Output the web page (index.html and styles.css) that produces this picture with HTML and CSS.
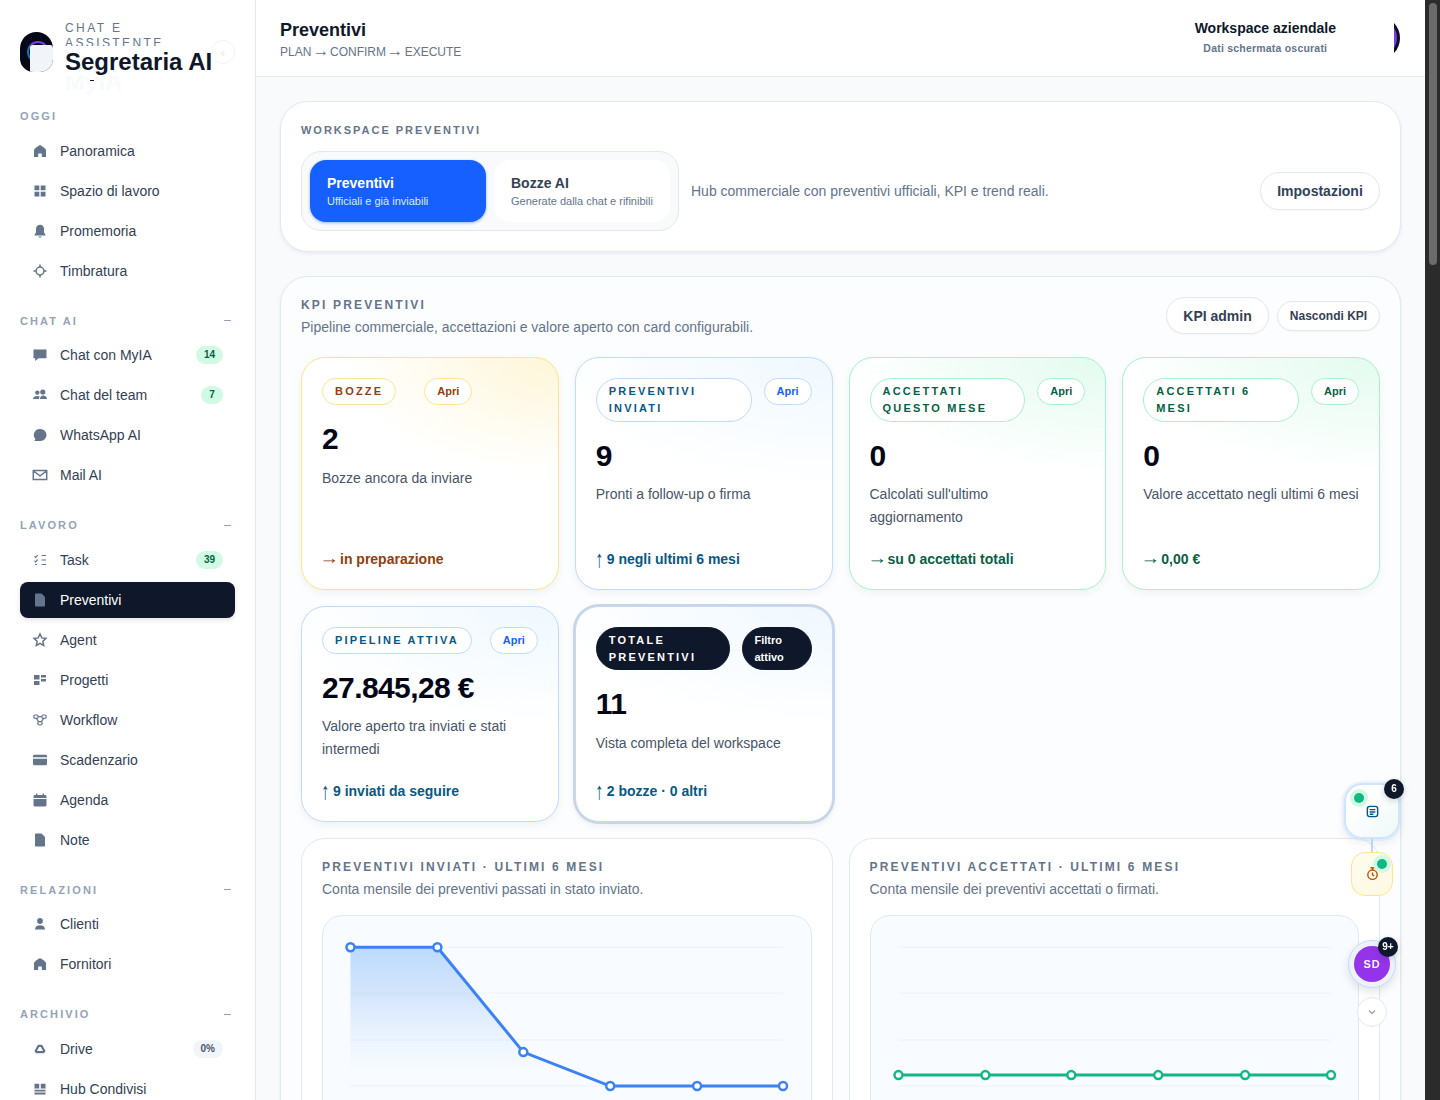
FILE: index.html
```html
<!DOCTYPE html>
<html lang="it">
<head>
    <meta charset="UTF-8">
    <meta name="viewport" content="width=device-width, initial-scale=1.0">
    <title>Preventivi - Segretaria AI</title>
    <link rel="stylesheet" href="styles.css">
</head>
<body>
    <!-- icon sprite -->
    <svg class="sprite" xmlns="http://www.w3.org/2000/svg">
        <symbol id="i-home" viewBox="0 0 16 16"><path d="M8 2C6 3 3.500 4.800 2 6.800V14h4.200v-3.600h3.600V14H14V6.800C12.500 4.800 10 3 8 2z"/></symbol>
        <symbol id="i-grid" viewBox="0 0 16 16"><path d="M2.500 2.500h4.800v4.800H2.500zM8.700 2.500h4.800v4.800H8.700zM2.500 8.700h4.800v4.800H2.500zM8.700 8.700h4.800v4.800H8.700z"/></symbol>
        <symbol id="i-bell" viewBox="0 0 16 16"><path d="M8 1.800c-2.500 0-4 1.800-4 4.200v3.600l-1.400 2v.8h10.800v-.8l-1.400-2V6c0-2.400-1.500-4.200-4-4.200zM6.400 13.400h3.200c-.2.800-.8 1.200-1.600 1.200s-1.400-.4-1.600-1.200z"/></symbol>
        <symbol id="i-target" viewBox="0 0 16 16"><path class="line" d="M8 1.500v2.700M8 11.800v2.700M1.500 8h2.700M11.800 8h2.700"/><circle class="line" cx="8" cy="8" r="3.900"/></symbol>
        <symbol id="i-chat" viewBox="0 0 16 16"><path d="M1.500 2.500h13v8.800H6.500L3 14l.3-2.700H1.500z"/></symbol>
        <symbol id="i-team" viewBox="0 0 16 16"><circle cx="5.300" cy="5.600" r="2.200"/><circle cx="10.800" cy="5" r="2.600"/><path d="M1 12c0-2 2-3.100 4.300-3.100 1 0 1.900.2 2.500.6-.6.600-.8 1.400-.8 2.500zM8 12c0-2.300 1.400-3.600 3-3.600s4 .8 4 3.600z"/></symbol>
        <symbol id="i-bubble" viewBox="0 0 16 16"><path d="M8.500 2a6 6 0 0 1 0 12H2.300l1.200-1.900A6 6 0 0 1 8.500 2z"/></symbol>
        <symbol id="i-mail" viewBox="0 0 16 16"><path class="line" d="M1.300 3.500h13.400v9H1.300zM1.500 4l6.500 4.800L14.500 4"/></symbol>
        <symbol id="i-task" viewBox="0 0 16 16"><path class="line thin" d="M2.500 4.300l1.200 1.100 2-2.200M2.500 8.800l1.200 1.100 2-2.200M9.500 3.500h4.500M9.500 8h4.500M9.500 12.500h4.500M3 12.500h2"/></symbol>
        <symbol id="i-doc" viewBox="0 0 16 16"><path d="M3 2.200c0-.4.300-.7.700-.7H9.500L13 5v8.800c0 .4-.3.700-.7.700H3.700c-.4 0-.7-.3-.7-.7z"/></symbol>
        <symbol id="i-star" viewBox="0 0 16 16"><path class="line" d="M8 2l1.800 3.900 4.200.5-3.100 2.900.8 4.200L8 11.400l-3.700 2.100.8-4.200L2 6.400l4.200-.5z"/></symbol>
        <symbol id="i-board" viewBox="0 0 16 16"><path d="M2 3h5.500v4.500H2zM9 3h5v2.500H9zM9 7h5v2.500H9zM2 9h5.500v4H2z"/></symbol>
        <symbol id="i-flow" viewBox="0 0 16 16"><g class="line thin"><rect x="1.800" y="3" width="4.300" height="3.400" rx="1.500"/><rect x="9.900" y="3" width="4.300" height="3.400" rx="1.500"/><rect x="5.800" y="9.600" width="4.300" height="3.400" rx="1.500"/><path d="M6.100 4.700h3.800M4.500 6.400l2 3.200M11.500 6.400l-2 3.200"/></g></symbol>
        <symbol id="i-card" viewBox="0 0 16 16"><path d="M1 4.200c0-.8.600-1.400 1.400-1.400h11.200c.8 0 1.400.6 1.400 1.400v1H1zM1 6.800h14v5c0 .8-.6 1.400-1.400 1.400H2.400c-.8 0-1.400-.6-1.400-1.400z"/></symbol>
        <symbol id="i-cal" viewBox="0 0 16 16"><path d="M4 1.500h1.300v1.400h5.400V1.500H12v1.400h1c.8 0 1.500.7 1.500 1.500v1.500h-13V4.400c0-.8.700-1.500 1.500-1.500h1zM1.500 7h13v6c0 .8-.7 1.500-1.500 1.500H3c-.8 0-1.500-.7-1.500-1.500z"/></symbol>
        <symbol id="i-user" viewBox="0 0 16 16"><circle cx="8" cy="5" r="2.900"/><path d="M3 13.500c0-2.800 2.200-4.300 5-4.300s5 1.500 5 4.300z"/></symbol>
        <symbol id="i-drive" viewBox="0 0 16 16"><path class="line heavy" d="M6.600 4.800h2.800l2.900 5.200-.8 1.200H4.500l-.8-1.200z"/></symbol>
        <symbol id="i-hub" viewBox="0 0 16 16"><path d="M2.500 2.800h4.700v4.600H2.500zM8.800 2.800h4.700v4.600H8.800zM2.500 8.800h11v1.800h-11zM2.500 11.600h11v1.800h-11z"/></symbol>
    </svg>

    <div class="app">
        <aside class="sidebar">
            <div class="brand">
                <div class="logo"><span class="logo-ring"></span><span class="logo-mask"></span></div>
                <div class="brand-text">
                    <div class="brand-kicker">CHAT E ASSISTENTE</div>
                    <div class="brand-title">Segretaria AI</div>
                    <div class="brand-ghost">MyIA</div>
                    <span class="brand-tick"></span>
                </div>
                <span class="brand-toggle">‹</span>
            </div>

            <div class="nav-label">OGGI</div>
            <a class="nav-item"><svg class="icon"><use href="#i-home"/></svg>Panoramica</a>
            <a class="nav-item"><svg class="icon"><use href="#i-grid"/></svg>Spazio di lavoro</a>
            <a class="nav-item"><svg class="icon"><use href="#i-bell"/></svg>Promemoria</a>
            <a class="nav-item"><svg class="icon"><use href="#i-target"/></svg>Timbratura</a>

            <div class="nav-label spaced">CHAT AI<span class="nav-dash"></span></div>
            <a class="nav-item"><svg class="icon"><use href="#i-chat"/></svg>Chat con MyIA<span class="nav-badge">14</span></a>
            <a class="nav-item"><svg class="icon"><use href="#i-team"/></svg>Chat del team<span class="nav-badge">7</span></a>
            <a class="nav-item"><svg class="icon"><use href="#i-bubble"/></svg>WhatsApp AI</a>
            <a class="nav-item"><svg class="icon"><use href="#i-mail"/></svg>Mail AI</a>

            <div class="nav-label spaced">LAVORO<span class="nav-dash"></span></div>
            <a class="nav-item"><svg class="icon"><use href="#i-task"/></svg>Task<span class="nav-badge">39</span></a>
            <a class="nav-item active"><svg class="icon"><use href="#i-doc"/></svg>Preventivi</a>
            <a class="nav-item"><svg class="icon"><use href="#i-star"/></svg>Agent</a>
            <a class="nav-item"><svg class="icon"><use href="#i-board"/></svg>Progetti</a>
            <a class="nav-item"><svg class="icon"><use href="#i-flow"/></svg>Workflow</a>
            <a class="nav-item"><svg class="icon"><use href="#i-card"/></svg>Scadenzario</a>
            <a class="nav-item"><svg class="icon"><use href="#i-cal"/></svg>Agenda</a>
            <a class="nav-item"><svg class="icon"><use href="#i-doc"/></svg>Note</a>

            <div class="nav-label spaced">RELAZIONI<span class="nav-dash"></span></div>
            <a class="nav-item"><svg class="icon"><use href="#i-user"/></svg>Clienti</a>
            <a class="nav-item"><svg class="icon"><use href="#i-home"/></svg>Fornitori</a>

            <div class="nav-label spaced">ARCHIVIO<span class="nav-dash"></span></div>
            <a class="nav-item"><svg class="icon"><use href="#i-drive"/></svg>Drive<span class="nav-badge grey">0%</span></a>
            <a class="nav-item"><svg class="icon"><use href="#i-hub"/></svg>Hub Condivisi</a>
        </aside>

        <div class="main">
            <header class="topbar">
                <div>
                    <h1>Preventivi</h1>
                    <div class="topbar-sub">PLAN <span class="arrow-right">→</span> CONFIRM <span class="arrow-right">→</span> EXECUTE</div>
                </div>
                <div class="topbar-right">
                    <div class="workspace">
                        <div class="workspace-name">Workspace aziendale</div>
                        <div class="workspace-note">Dati schermata oscurati</div>
                    </div>
                    <div class="avatar-clip"><span class="avatar-disc"></span></div>
                </div>
            </header>

            <div class="content">
                <section class="panel">
                    <div class="eyebrow">WORKSPACE PREVENTIVI</div>
                    <div class="switch-row">
                        <div class="tabs">
                            <div class="tab current"><strong>Preventivi</strong><span>Ufficiali e già inviabili</span></div>
                            <div class="tab"><strong>Bozze AI</strong><span>Generate dalla chat e rifinibili</span></div>
                        </div>
                        <p class="switch-text">Hub commerciale con preventivi ufficiali, KPI e trend reali.</p>
                        <button class="btn btn-settings">Impostazioni</button>
                    </div>
                </section>

                <section class="panel panel-soft">
                    <div class="kpi-head">
                        <div>
                            <div class="eyebrow large">KPI PREVENTIVI</div>
                            <p class="kpi-intro">Pipeline commerciale, accettazioni e valore aperto con card configurabili.</p>
                        </div>
                        <div class="kpi-actions">
                            <button class="btn btn-admin">KPI admin</button>
                            <button class="btn btn-hide">Nascondi KPI</button>
                        </div>
                    </div>

                    <div class="kpi-grid">
                        <article class="kpi amber">
                            <div class="kpi-top tight"><span class="pill">BOZZE</span><span class="pill-link">Apri</span></div>
                            <div class="kpi-value">2</div>
                            <p class="kpi-desc">Bozze ancora da inviare</p>
                            <div class="kpi-foot"><span class="arrow-right">→</span><span class="foot-text">in preparazione</span></div>
                        </article>
                        <article class="kpi blue">
                            <div class="kpi-top"><span class="pill">PREVENTIVI INVIATI</span><span class="pill-link">Apri</span></div>
                            <div class="kpi-value">9</div>
                            <p class="kpi-desc">Pronti a follow-up o firma</p>
                            <div class="kpi-foot"><span class="arrow-up">↑</span><span class="foot-text">9 negli ultimi 6 mesi</span></div>
                        </article>
                        <article class="kpi green">
                            <div class="kpi-top"><span class="pill">ACCETTATI QUESTO MESE</span><span class="pill-link">Apri</span></div>
                            <div class="kpi-value">0</div>
                            <p class="kpi-desc">Calcolati sull'ultimo aggiornamento</p>
                            <div class="kpi-foot"><span class="arrow-right">→</span><span class="foot-text">su 0 accettati totali</span></div>
                        </article>
                        <article class="kpi green">
                            <div class="kpi-top"><span class="pill">ACCETTATI 6 MESI</span><span class="pill-link">Apri</span></div>
                            <div class="kpi-value">0</div>
                            <p class="kpi-desc">Valore accettato negli ultimi 6 mesi</p>
                            <div class="kpi-foot"><span class="arrow-right">→</span><span class="foot-text">0,00 €</span></div>
                        </article>
                        <article class="kpi blue">
                            <div class="kpi-top"><span class="pill">PIPELINE ATTIVA</span><span class="pill-link">Apri</span></div>
                            <div class="kpi-value">27.845,28 €</div>
                            <p class="kpi-desc">Valore aperto tra inviati e stati intermedi</p>
                            <div class="kpi-foot"><span class="arrow-up">↑</span><span class="foot-text">9 inviati da seguire</span></div>
                        </article>
                        <article class="kpi blue selected">
                            <div class="kpi-top"><span class="pill">TOTALE PREVENTIVI</span><span class="pill-link filter">Filtro attivo</span></div>
                            <div class="kpi-value">11</div>
                            <p class="kpi-desc">Vista completa del workspace</p>
                            <div class="kpi-foot"><span class="arrow-up">↑</span><span class="foot-text">2 bozze · 0 altri</span></div>
                        </article>
                    </div>

                    <div class="chart-grid">
                        <article class="chart-card">
                            <div class="chart-title">PREVENTIVI INVIATI · ULTIMI 6 MESI</div>
                            <p class="chart-sub">Conta mensile dei preventivi passati in stato inviato.</p>
                            <div class="chart-box">
                                <svg class="chart" viewBox="-0.5 -0.25 488 240">
                                    <defs>
                                        <linearGradient id="blue-fill" gradientUnits="userSpaceOnUse" x1="0" y1="31" x2="0" y2="155">
                                            <stop offset="0" stop-color="#93c5fd" stop-opacity="0.6"/>
                                            <stop offset="0.4" stop-color="#a5c8f5" stop-opacity="0.42"/>
                                            <stop offset="1" stop-color="#bfdbfe" stop-opacity="0"/>
                                        </linearGradient>
                                    </defs>
                                    <path class="grid-line" d="M27 31H460M27 77H460M27 124H460M27 170H460"/>
                                    <path fill="url(#blue-fill)" d="M27 31H114L200 136L287 170H27z"/>
                                    <path class="plot blue-line" d="M27 31H114L200 136L287 170H460"/>
                                    <g class="dots blue-line">
                                        <circle cx="27" cy="31" r="4"/><circle cx="114" cy="31" r="4"/><circle cx="200" cy="136" r="4"/>
                                        <circle cx="287" cy="170" r="4"/><circle cx="374" cy="170" r="4"/><circle cx="460" cy="170" r="4"/>
                                    </g>
                                </svg>
                            </div>
                        </article>
                        <article class="chart-card">
                            <div class="chart-title">PREVENTIVI ACCETTATI · ULTIMI 6 MESI</div>
                            <p class="chart-sub">Conta mensile dei preventivi accettati o firmati.</p>
                            <div class="chart-box">
                                <svg class="chart" viewBox="-0.5 -0.25 488 240">
                                    <path class="grid-line" d="M27 31H460M27 77H460M27 124H460M27 170H460"/>
                                    <path class="plot green-line" d="M27 159H460"/>
                                    <g class="dots green-line">
                                        <circle cx="27" cy="159" r="4"/><circle cx="114" cy="159" r="4"/><circle cx="200" cy="159" r="4"/>
                                        <circle cx="287" cy="159" r="4"/><circle cx="374" cy="159" r="4"/><circle cx="460" cy="159" r="4"/>
                                    </g>
                                </svg>
                            </div>
                        </article>
                    </div>
                </section>
            </div>
        </div>

        <div class="scrollbar"><span class="scrollbar-thumb"></span></div>
    </div>

    <!-- floating dock -->
    <div class="dock">
        <div class="dock-note">
            <span class="dot dot-note"></span>
            <span class="count count-note">6</span>
            <svg class="dock-icon" viewBox="0 0 16 16"><rect x="2.500" y="2.500" width="11" height="11" rx="2.500"/><path d="M5 6h6M5 8.500h6M5 11h4"/></svg>
        </div>
        <span class="dock-link"></span>
        <div class="dock-timer">
            <span class="dot dot-timer"></span>
            <svg class="dock-icon" viewBox="0 0 16 16"><circle cx="8" cy="9.300" r="5"/><path d="M5.800 1.800h4.400M8 1.800v2.500M8 6.800v2.700l1.800 1"/></svg>
        </div>
        <div class="dock-user">
            <span class="user-disc">SD</span>
            <span class="count count-user">9+</span>
        </div>
        <button class="dock-down"><svg viewBox="0 0 12 12"><path d="M3 4.500L6 7.500L9 4.500"/></svg></button>
    </div>
</body>
</html>
```

FILE: styles.css
```css
* {
    box-sizing: border-box;
}

html, body {
    height: 100%;
}

body {
    margin: 0;
    font-family: "Liberation Sans", Arial, sans-serif;
    color: #0f172a;
    background-color: #f8fafc;
    overflow: hidden;
}

.sprite {
    display: none;
}

.app {
    display: flex;
    height: 100vh;
    overflow: hidden;
}

/* sidebar */
.sidebar {
    flex: 0 0 256px;
    padding: 0 20px;
    background-color: #fff;
    border-right: 1px solid #e2e8f0;
    overflow: hidden;
}

.brand {
    position: relative;
    display: flex;
    height: 109px;
    padding-top: 21px;
}

.logo {
    position: absolute;
    top: 32px;
    left: 0;
    width: 33px;
    height: 40px;
    border-radius: 17px 17px 14px 14px;
    background-color: #050816;
    overflow: hidden;
}

.logo-ring {
    display: block;
    width: 22px;
    height: 22px;
    margin: 9px 0 0 7px;
    border: 2px solid #1d6fb8;
    border-top-color: #7c3aed;
    border-right-color: #1d6fb8;
    border-radius: 50%;
}

.logo-mask {
    position: absolute;
    top: 13px;
    left: 10px;
    width: 23px;
    height: 27px;
    background-color: #f1f5f9;
    border-radius: 3px 3px 3px 0;
}

.brand-text {
    position: relative;
    margin-left: 45px;
    width: 150px;
}

.brand-kicker {
    height: 25px;
    font-size: 12px;
    line-height: 15px;
    letter-spacing: 0.2em;
    color: #64748b;
    overflow: hidden;
}

.brand-title {
    position: relative;
    z-index: 1;
    margin-top: 2px;
    background-color: #fff;
    font-size: 24px;
    line-height: 28px;
    font-weight: 700;
    white-space: nowrap;
}

.brand-ghost {
    height: 12px;
    font-size: 24px;
    line-height: 12px;
    font-weight: 700;
    color: #f8fafc;
}

.brand-tick {
    position: absolute;
    top: 59px;
    left: 25px;
    width: 4px;
    height: 1px;
    background-color: #0f172a;
}

.brand-toggle {
    position: absolute;
    top: 40px;
    right: 0;
    display: flex;
    align-items: center;
    justify-content: center;
    width: 24px;
    height: 24px;
    border: 1px solid #eef2f7;
    border-radius: 50%;
    font-size: 13px;
    color: #e2e8f0;
}

.nav-label {
    display: flex;
    align-items: center;
    justify-content: space-between;
    height: 14px;
    margin-bottom: 9.5px;
    font-size: 11px;
    font-weight: 700;
    letter-spacing: 0.19em;
    color: #94a3b8;
}

.nav-label.spaced {
    margin-top: 25px;
}

.nav-dash {
    width: 7px;
    height: 1px;
    margin-right: 4px;
    background-color: #94a3b8;
}

.nav-item {
    display: flex;
    align-items: center;
    gap: 12px;
    height: 36px;
    margin-bottom: 4px;
    padding: 0 12px;
    border-radius: 8px;
    font-size: 14px;
    color: #334155;
}

.nav-item:last-child,
.nav-item:has(+ .nav-label) {
    margin-bottom: 0;
}

.nav-item.active {
    background-color: #0f172a;
    color: #fff;
    box-shadow: 0 2px 5px rgba(15, 23, 42, 0.12);
}

.icon {
    flex: none;
    width: 16px;
    height: 16px;
    fill: #64748b;
}

.line {
    fill: none;
    stroke: #64748b;
    stroke-width: 1.5;
}

.line.thin {
    stroke-width: 1.2;
}

.line.heavy {
    stroke-width: 2.2;
}

.nav-badge {
    margin-left: auto;
    min-width: 22px;
    height: 18px;
    padding: 0 8px;
    border-radius: 9px;
    background-color: #d1fae5;
    color: #065f46;
    font-size: 10px;
    line-height: 18px;
    font-weight: 700;
    text-align: center;
}

.nav-badge.grey {
    background-color: #f1f5f9;
    color: #475569;
}

/* main column */
.main {
    flex: 1;
    min-width: 0;
    overflow: hidden;
}

.topbar {
    display: flex;
    align-items: flex-start;
    justify-content: space-between;
    height: 77px;
    padding: 18px 25px 0 24px;
    background-color: #fff;
    border-bottom: 1px solid #e2e8f0;
}

h1 {
    margin: 0 0 2px;
    font-size: 18px;
    line-height: 24px;
    font-weight: 700;
}

.topbar-sub {
    font-size: 12px;
    line-height: 16px;
    color: #64748b;
}

.arrow-right,
.arrow-up {
    display: inline-block;
    font-weight: 400;
}

.arrow-right {
    transform: translateY(-1px) scale(1.4, 1.3);
}

.kpi-foot .arrow-right {
    transform: translateY(-2px) scale(1.4, 1.3);
}

.arrow-up {
    transform: translateY(-1px) scale(1.2, 1.7);
}

.topbar-right {
    display: flex;
    align-items: center;
    margin-top: -4px;
}

.workspace {
    text-align: center;
}

.workspace-name {
    font-size: 14px;
    line-height: 18px;
    font-weight: 700;
}

.workspace-note {
    margin-top: 4px;
    font-size: 10.5px;
    line-height: 14px;
    font-weight: 700;
    letter-spacing: 0.02em;
    color: #64748b;
}

.avatar-clip {
    width: 6px;
    height: 44px;
    margin: 2px 0 0 58px;
    overflow: hidden;
}

.avatar-disc {
    display: block;
    width: 44px;
    height: 44px;
    margin-left: -38px;
    border: 3px solid #0b1020;
    border-radius: 50%;
    background-color: #7c3aed;
}

.content {
    display: flex;
    flex-direction: column;
    gap: 24px;
    padding: 24px 24px 40px;
}

.panel {
    padding: 20px;
    background-color: #fff;
    border: 1px solid #e2e8f0;
    border-radius: 28px;
    box-shadow: 0 2px 4px rgba(15, 23, 42, 0.06);
}

.panel-soft {
    padding-top: 19px;
    background-color: #fcfdfe;
}

.eyebrow {
    font-size: 11px;
    line-height: 16px;
    font-weight: 700;
    letter-spacing: 0.18em;
    color: #64748b;
}

.eyebrow.large {
    padding-top: 1px;
    font-size: 12px;
    line-height: 16px;
}

.switch-row {
    display: flex;
    align-items: center;
    gap: 12px;
    margin-top: 13px;
}

.tabs {
    display: flex;
    gap: 8px;
    padding: 8px;
    background-color: #f8fafc;
    border: 1px solid #e2e8f0;
    border-radius: 20px;
}

.tab {
    display: flex;
    flex-direction: column;
    justify-content: center;
    width: 176px;
    height: 62px;
    padding: 0 16px 0 17px;
    background-color: #fff;
    border-radius: 16px;
}

.tab strong {
    font-size: 14px;
    line-height: 20px;
    color: #334155;
}

.tab span {
    margin-top: 1px;
    font-size: 11px;
    line-height: 15px;
    color: #64748b;
}

.tab.current {
    background-color: #1660ff;
    box-shadow: 0 1px 3px rgba(22, 96, 255, 0.45);
}

.tab.current strong {
    color: #fff;
}

.tab.current span {
    color: #dbeafe;
}

.switch-text {
    margin: 0;
    font-size: 14px;
    color: #64748b;
}

.btn {
    padding: 0;
    background-color: #fff;
    border: 1px solid #e2e8f0;
    border-radius: 999px;
    font-family: inherit;
    font-weight: 700;
    color: #334155;
    box-shadow: 0 1px 2px rgba(15, 23, 42, 0.04);
}

.btn-settings {
    width: 120px;
    height: 38px;
    margin-left: auto;
    font-size: 14px;
}

.kpi-head {
    display: flex;
    align-items: center;
    justify-content: space-between;
    margin-bottom: 20px;
}

.kpi-intro {
    margin: 4px 0 0;
    font-size: 14px;
    line-height: 20px;
    color: #64748b;
}

.kpi-actions {
    display: flex;
    align-items: center;
    gap: 8px;
    margin-bottom: 2px;
}

.btn-admin {
    width: 103px;
    height: 37px;
    font-size: 14px;
}

.btn-hide {
    width: 103px;
    height: 30px;
    font-size: 12px;
}

/* kpi cards */
.kpi-grid {
    display: grid;
    grid-template-columns: repeat(4, 1fr);
    grid-template-rows: 232.75px 216px;
    gap: 16px;
}

.kpi {
    display: flex;
    flex-direction: column;
    padding: 20px;
    border: 1px solid;
    border-radius: 24px;
    box-shadow: 0 3px 8px rgba(15, 23, 42, 0.05);
}

.kpi.amber {
    border-color: #fde68a;
    background: radial-gradient(ellipse 85% 50% at 100% 0, #fef6d8, rgba(255, 255, 255, 0) 100%), #fff;
    --tone: #92400e;
    --link: #92400e;
}

.kpi.blue {
    border-color: #bfdbfe;
    background: radial-gradient(ellipse 110% 55% at 100% 0, #eff8ff, rgba(255, 255, 255, 0) 100%), #fff;
    --tone: #075985;
    --link: #1660ff;
}

.kpi.green {
    border-color: #a7f3d0;
    background: radial-gradient(ellipse 100% 50% at 100% 0, #e3fbef, rgba(255, 255, 255, 0) 100%), #fff;
    --tone: #065f46;
    --link: #065f46;
}

.kpi.selected {
    box-shadow: 0 0 0 2px #cbd5e1, 0 3px 8px rgba(15, 23, 42, 0.08);
}

.kpi-top {
    display: flex;
    align-items: flex-start;
    justify-content: space-between;
    gap: 12px;
    border-color: inherit;
}

.kpi-top.tight {
    justify-content: flex-start;
    gap: 28px;
}

.pill,
.pill-link {
    padding: 4.25px 12px;
    background-color: #fff;
    border: 1px solid;
    border-color: inherit;
    border-radius: 22px;
    font-size: 11px;
    line-height: 16.5px;
    font-weight: 700;
}

.pill {
    letter-spacing: 0.2em;
    color: var(--tone);
}

.pill-link {
    flex: none;
    color: var(--link);
}

.selected .pill,
.selected .pill-link {
    background-color: #0f172a;
    border-color: #0f172a;
    color: #fff;
}

.pill-link.filter {
    width: 70px;
}

.kpi-value {
    margin: 16px 0 9.500px;
    font-size: 30px;
    line-height: 36px;
    font-weight: 700;
    letter-spacing: -0.02em;
    color: #020617;
}

.kpi-desc {
    margin: 0;
    font-size: 14px;
    line-height: 23px;
    color: #475569;
}

.kpi-foot {
    margin-top: auto;
    font-size: 14px;
    line-height: 20px;
    font-weight: 700;
    color: var(--tone);
}

.foot-text {
    margin-left: 4px;
}

/* charts */
.chart-grid {
    display: grid;
    grid-template-columns: 1fr 1fr;
    gap: 16px;
    margin-top: 16px;
}

.chart-card {
    padding: 20px;
    background-color: #fff;
    border: 1px solid #e2e8f0;
    border-radius: 24px;
}

.chart-title {
    font-size: 12px;
    line-height: 16px;
    font-weight: 700;
    letter-spacing: 0.18em;
    color: #64748b;
    white-space: nowrap;
}

.chart-sub {
    margin: 4px 0 16px;
    font-size: 14px;
    line-height: 20px;
    color: #64748b;
}

.chart-box {
    background-color: #f8fbff;
    border: 1px solid #e2e8f0;
    border-radius: 20px;
}

.chart {
    display: block;
    width: 100%;
}

.grid-line {
    fill: none;
    stroke: #edf1f6;
    stroke-width: 1;
}

.plot {
    fill: none;
    stroke-width: 3;
}

.dots {
    fill: #fff;
    stroke-width: 2.500;
}

.blue-line {
    stroke: #3b82f6;
}

.green-line {
    stroke: #10b981;
}

/* fake browser scrollbar */
.scrollbar {
    flex: 0 0 15px;
    padding: 3px 3px 0 4px;
    background-color: #2b2b2b;
}

.scrollbar-thumb {
    display: block;
    height: 262px;
    border-radius: 4px;
    background-color: #6b6b6b;
}

/* floating dock */
.dock {
    position: fixed;
    top: 783px;
    left: 1344px;
    display: flex;
    flex-direction: column;
    align-items: center;
    width: 56px;
}

.dock-note {
    position: relative;
    display: flex;
    align-items: center;
    justify-content: center;
    width: 56px;
    height: 56px;
    background: linear-gradient(135deg, #fff 30%, #eef8f8);
    border: 2px solid #cfe4fd;
    border-radius: 18px;
    box-shadow: 0 0 0 2px rgba(191, 219, 254, 0.25), 0 4px 10px rgba(15, 23, 42, 0.07);
}

.dock-link {
    width: 2px;
    height: 13px;
    background-color: #bfdbfe;
}

.dock-timer {
    position: relative;
    display: flex;
    align-items: center;
    justify-content: center;
    width: 42px;
    height: 44px;
    background: linear-gradient(135deg, #fffdf0, #fff7e0);
    border: 1px solid #fde68a;
    border-radius: 14px;
}

.dock-icon {
    width: 15px;
    height: 15px;
    fill: none;
    stroke-width: 1.5;
}

.dock-note .dock-icon {
    stroke: #075985;
}

.dock-timer .dock-icon {
    margin-top: -1px;
    stroke: #b45309;
}

.dot {
    position: absolute;
    width: 10px;
    height: 10px;
    border-radius: 50%;
    background-color: #10b981;
    box-shadow: 0 0 0 4px #d1fae5;
}

.dot-note {
    top: 8px;
    left: 8px;
}

.dot-timer {
    top: 6px;
    right: 5px;
}

.count {
    position: absolute;
    width: 20px;
    height: 20px;
    border-radius: 50%;
    background-color: #0f172a;
    color: #fff;
    font-size: 10px;
    line-height: 20px;
    font-weight: 700;
    text-align: center;
    box-shadow: 0 2px 6px rgba(15, 23, 42, 0.18);
}

.count-note {
    top: -6px;
    right: -6px;
}

.dock-user {
    position: relative;
    display: flex;
    align-items: center;
    justify-content: center;
    width: 48px;
    height: 48px;
    margin-top: 44px;
    border: 1px solid #bfdbfe;
    border-radius: 50%;
    background-color: #eef2f8;
    box-shadow: 0 4px 10px rgba(15, 23, 42, 0.12);
}

.user-disc {
    width: 36px;
    height: 36px;
    border-radius: 50%;
    background-color: #9333ea;
    color: #fff;
    font-size: 11px;
    line-height: 36px;
    font-weight: 700;
    letter-spacing: 0.08em;
    text-align: center;
}

.count-user {
    top: -4px;
    right: -3px;
}

.dock-down {
    display: flex;
    align-items: center;
    justify-content: center;
    width: 30px;
    height: 30px;
    margin-top: 9px;
    padding: 0;
    background-color: #fff;
    border: 1px solid #e2e8f0;
    border-radius: 50%;
}

.dock-down svg {
    width: 12px;
    height: 12px;
    fill: none;
    stroke: #94a3b8;
    stroke-width: 1.4;
}
```
